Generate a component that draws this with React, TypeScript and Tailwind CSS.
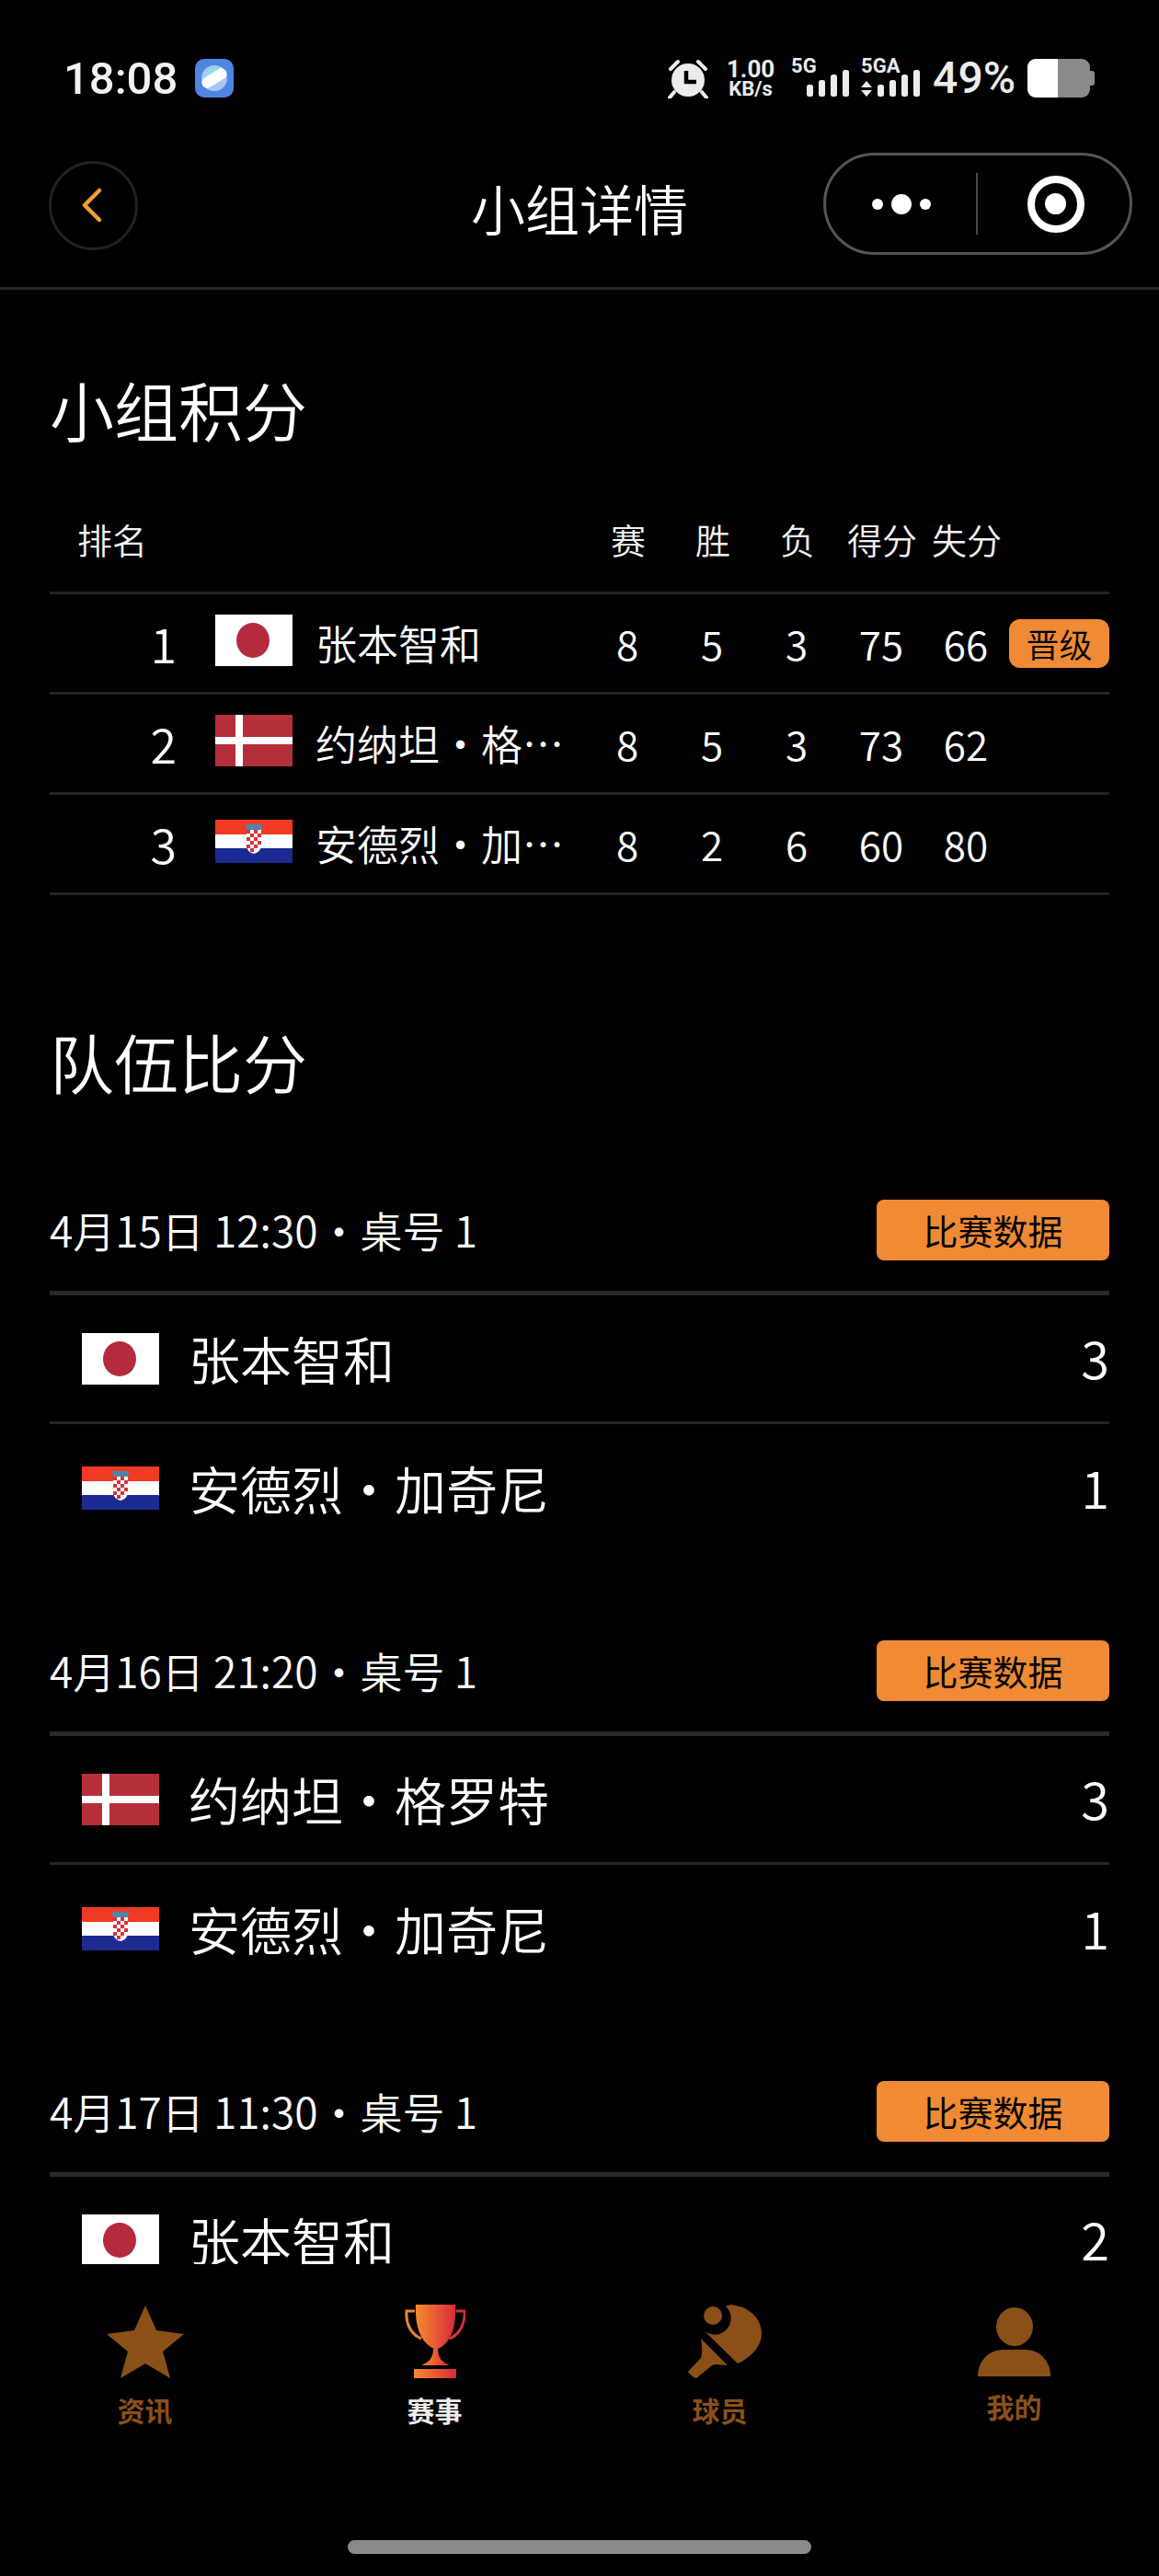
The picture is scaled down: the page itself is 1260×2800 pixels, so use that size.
import React from 'react';

type Country = 'jp' | 'dk' | 'hr';

const standings = [
  { rank: 1, country: 'jp' as Country, name: '张本智和', played: 8, won: 5, lost: 3, scored: 75, conceded: 66, promoted: true },
  { rank: 2, country: 'dk' as Country, name: '约纳坦・格罗特', played: 8, won: 5, lost: 3, scored: 73, conceded: 62, promoted: false },
  { rank: 3, country: 'hr' as Country, name: '安德烈・加奇尼', played: 8, won: 2, lost: 6, scored: 60, conceded: 80, promoted: false },
];

const matches = [
  { id: 1, time: '4月15日 12:30・桌号 1', players: [{ country: 'jp' as Country, name: '张本智和', score: 3 }, { country: 'hr' as Country, name: '安德烈・加奇尼', score: 1 }] },
  { id: 2, time: '4月16日 21:20・桌号 1', players: [{ country: 'dk' as Country, name: '约纳坦・格罗特', score: 3 }, { country: 'hr' as Country, name: '安德烈・加奇尼', score: 1 }] },
  { id: 3, time: '4月17日 11:30・桌号 1', players: [{ country: 'jp' as Country, name: '张本智和', score: 2 }, { country: 'dk' as Country, name: '约纳坦・格罗特', score: 3 }] },
];

const Flag = ({ country }: { country: Country }) => {
  if (country === 'jp') {
    return (
      <svg width="84" height="56" viewBox="0 0 84 56" className="shrink-0 block">
        <rect width="84" height="56" fill="#fff" />
        <ellipse cx="41" cy="28" rx="18" ry="19" fill="#b52a3c" />
      </svg>
    );
  }
  if (country === 'dk') {
    return (
      <svg width="84" height="56" viewBox="0 0 84 56" className="shrink-0 block">
        <rect width="84" height="56" fill="#b52f3b" />
        <rect x="22" width="8" height="56" fill="#fff" />
        <rect y="24" width="84" height="8" fill="#fff" />
      </svg>
    );
  }
  return (
    <svg width="84" height="47" viewBox="0 0 84 47" className="shrink-0 block">
      <rect width="84" height="16" fill="#f03a24" />
      <rect y="16" width="84" height="15" fill="#fff" />
      <rect y="31" width="84" height="16" fill="#1c2a92" />
      <path d="M33 5 L51 5 L50 11 L34 11 Z" fill="#4d86a8" />
      <path d="M34 11 H50 V27 Q50 35 42 37 Q34 35 34 27 Z" fill="#fff" />
      <path d="M34 11h4v4h-4z M42 11h4v4h-4z M38 15h4v4h-4z M46 15h4v4h-4z M34 19h4v4h-4z M42 19h4v4h-4z M38 23h4v4h-4z M46 23h4v4h-4z M34 27h4v4h-4z M42 27h4v4h-4z M38 31h4v4h-4z" fill="#d8323a" />
    </svg>
  );
};

const SignalBars = () => (
  <svg width="46" height="29" viewBox="0 0 46 29" className="block">
    <rect x="0" y="16" width="7" height="13" rx="2.5" fill="#ececec" />
    <rect x="13" y="11" width="7" height="18" rx="2.5" fill="#ececec" />
    <rect x="26" y="5" width="7" height="24" rx="2.5" fill="#ececec" />
    <rect x="39" y="0" width="7" height="29" rx="2.5" fill="#ececec" />
  </svg>
);

const StatusBar = () => (
  <div className="h-[146px] shrink-0 flex items-start justify-between pt-[64px] pl-[69px] pr-[70px] font-['Roboto',sans-serif]">
    <div className="flex items-center gap-[19px] h-[42px]">
      <span className="text-[49px] leading-none font-medium text-[#f2f2f2]">18:08</span>
      <svg width="42" height="42" viewBox="0 0 42 42">
        <rect width="42" height="42" rx="10" fill="#4f84e0" />
        <circle cx="21" cy="21" r="14" fill="#a9c5f2" />
        <path d="M10 19 C14 10 24 6 31 10 L12 26 Z" fill="#8fdcec" />
        <rect x="6" y="15" width="30" height="12" rx="6" fill="#fff" transform="rotate(-32 21 21)" />
      </svg>
    </div>
    <div className="flex items-start">
      <svg width="44" height="43" viewBox="0 0 44 43" className="block">
        <circle cx="22" cy="23" r="18" fill="#ececec" />
        <path d="M20 13 V25 H31" fill="none" stroke="#000" strokeWidth="4.5" />
        <path d="M3 11 L11 3 M41 11 L33 3 M7 36 L2 42 M37 36 L42 42" stroke="#ececec" strokeWidth="4" strokeLinecap="round" />
      </svg>
      <div className="ml-[20px] w-[52px] flex flex-col items-center font-bold text-[#ececec]">
        <span className="text-[26px] leading-[20px] mt-[1px]">1.00</span>
        <span className="text-[22px] leading-[20px] mt-[2px]">KB/s</span>
      </div>
      <div className="ml-[18px] w-[63px] flex flex-col">
        <span className="text-[22px] leading-[16px] font-bold text-[#ececec]">5G</span>
        <div className="self-end -mt-[4px]"><SignalBars /></div>
      </div>
      <div className="ml-[13px] w-[64px] flex flex-col">
        <span className="text-[22px] leading-[16px] font-bold text-[#ececec]">5GA</span>
        <div className="flex items-end justify-between -mt-[4px]">
          <svg width="12" height="17" viewBox="0 0 12 17" className="block">
            <path d="M6 0 L12 7 H0 Z M0 10 H12 L6 17 Z" fill="#ececec" />
          </svg>
          <SignalBars />
        </div>
      </div>
      <span className="ml-[14px] text-[48px] leading-[42px] font-medium text-[#ececec]">49%</span>
      <div className="ml-[13px] flex items-center h-[42px]">
        <div className="w-[68px] h-[42px] rounded-[9px] bg-[#8a8a8a] overflow-hidden">
          <div className="w-[33px] h-full bg-white" />
        </div>
        <div className="w-[5px] h-[16px] rounded-r-[3px] bg-[#8a8a8a]" />
      </div>
    </div>
  </div>
);

const NavBar = () => (
  <div className="h-[169px] shrink-0 grid grid-cols-[1fr_auto_1fr] items-center border-b-[3px] border-[#2a2a2a] pb-[16px] pt-[4px]">
    <div className="pl-[53px]">
      <div className="w-[97px] h-[97px] rounded-full border-[3px] border-[#222222] flex items-center justify-center pr-[4px]">
        <svg width="24" height="38" viewBox="0 0 24 38">
          <path d="M20 3 L4 19 L20 35" fill="none" stroke="#f0a030" strokeWidth="4.5" strokeLinecap="round" strokeLinejoin="round" />
        </svg>
      </div>
    </div>
    <h1 className="mt-[5px] text-[59px] leading-none font-[350] text-white">小组详情</h1>
    <div className="flex justify-end pr-[29px]">
      <div className="w-[336px] h-[111px] mb-[3px] rounded-full border-[3px] border-[#555555] flex items-center">
        <div className="w-[163px] flex items-center justify-center gap-[9px]">
          <span className="w-[12px] h-[12px] rounded-full bg-white" />
          <span className="w-[22px] h-[22px] rounded-full bg-white" />
          <span className="w-[12px] h-[12px] rounded-full bg-white" />
        </div>
        <div className="w-[2px] h-[67px] bg-[#4a4a4a]" />
        <div className="flex-1 flex items-center justify-center pl-[4px]">
          <div className="w-[62px] h-[62px] rounded-full border-[8px] border-white flex items-center justify-center">
            <span className="w-[23px] h-[23px] rounded-full bg-white" />
          </div>
        </div>
      </div>
    </div>
  </div>
);

const statCell = 'w-[92px] shrink-0 text-center';

const Standings = () => (
  <section>
    <h2 className="text-[70px] leading-none font-[350] text-white">小组积分</h2>
    <div className="mt-[56px] h-[110px] flex items-center border-b-[3px] border-[#242424] text-[38px] font-[350] text-[#f2f2f2] pb-[8px]">
      <span className="w-[583px] pl-[30px]">排名</span>
      <span className={statCell}>赛</span>
      <span className={statCell}>胜</span>
      <span className={statCell}>负</span>
      <span className={statCell}>得分</span>
      <span className={statCell}>失分</span>
    </div>
    {standings.map((row) => (
      <div key={row.rank} className="h-[109px] flex items-center border-b-[3px] border-[#242424] text-[44px] font-[350] text-white">
        <span className="w-[138px] shrink-0 text-right text-[52px] leading-none">{row.rank}</span>
        <div className="ml-[42px] shrink-0 -mt-[6px]">
          <Flag country={row.country} />
        </div>
        <span className="w-[275px] shrink-0 truncate ml-[25px] text-[45px]">{row.name}</span>
        <span className="w-[18px] shrink-0" />
        <span className={statCell}>{row.played}</span>
        <span className={statCell}>{row.won}</span>
        <span className={statCell}>{row.lost}</span>
        <span className={statCell}>{row.scored}</span>
        <span className={statCell}>{row.conceded}</span>
        {row.promoted && (
          <span className="ml-[1px] w-[109px] h-[53px] shrink-0 rounded-[12px] bg-[#f08a34] text-[36px] leading-none text-black flex items-center justify-center">
            晋级
          </span>
        )}
      </div>
    ))}
  </section>
);

const MatchCard = ({ match }: { match: (typeof matches)[number] }) => (
  <div className="mb-[96px]">
    <div className="flex items-center justify-between pb-[33px] border-b-[5px] border-[#2a2a2a]">
      <span className="text-[46px] leading-[1.2] font-[350] text-white">{match.time}</span>
      <span className="w-[253px] h-[66px] rounded-[8px] bg-[#f08a34] text-[38px] leading-none text-black flex items-center justify-center">
        比赛数据
      </span>
    </div>
    {match.players.map((player, index) => (
      <div
        key={player.name}
        className={
          index === 0
            ? 'h-[140px] flex items-center pl-[35px] border-b-[3px] border-[#242424]'
            : 'h-[139px] flex items-center pl-[35px]'
        }
      >
        <Flag country={player.country} />
        <span className="ml-[32px] mb-[2px] flex-1 text-[56px] leading-[1.2] font-[350] text-white">{player.name}</span>
        <span className="mb-[4px] text-[56px] leading-[1.2] font-[350] text-white">{player.score}</span>
      </div>
    ))}
  </div>
);

const Tab = ({ label, labelClass, children }: { label: string; labelClass: string; children: React.ReactNode }) => (
  <div className="flex flex-col items-center">
    <div className="h-[80px] flex items-center justify-center">{children}</div>
    <span className={labelClass}>{label}</span>
  </div>
);

const TabBar = () => (
  <div className="h-[339px] shrink-0 bg-black flex flex-col">
    <div className="grid grid-cols-4 pt-[44px]">
      <Tab label="资讯" labelClass="mt-[19px] text-[30px] leading-none font-bold text-[#8a5018]">
        <svg width="84" height="79" viewBox="0 0 84 79">
          <path d="M42 0 L54 27 L84 31 L61 50 L69 79 L42 63 L15 79 L23 50 L0 31 L30 27 Z" fill="#8a5018" />
        </svg>
      </Tab>
      <Tab label="赛事" labelClass="mt-[19px] text-[30px] leading-none font-bold text-[#ececec]">
        <svg width="66" height="80" viewBox="0 0 66 80">
          <defs>
            <linearGradient id="cup" x1="0" y1="0" x2="1" y2="0">
              <stop offset="0" stopColor="#f08a30" />
              <stop offset="0.3" stopColor="#ee6f30" />
              <stop offset="1" stopColor="#d8283c" />
            </linearGradient>
          </defs>
          <path d="M12 0 H55 C56 22 52 42 34 49 C16 42 11 22 12 0 Z" fill="url(#cup)" />
          <path d="M11 7 H2 C1 20 6 32 18 37 M56 7 H65 C66 20 60 32 49 37" fill="none" stroke="url(#cup)" strokeWidth="3" />
          <path d="M31 48 H36 C36 58 41 63 49 66 H18 C26 63 31 58 31 48 Z" fill="url(#cup)" />
          <rect x="10" y="70" width="46" height="10" fill="url(#cup)" />
        </svg>
      </Tab>
      <Tab label="球员" labelClass="mt-[19px] mr-[10px] text-[30px] leading-none font-bold text-[#8a5018]">
        <svg width="80" height="80" viewBox="0 0 80 80">
          <circle cx="27" cy="12" r="10" fill="#8a5018" />
          <path d="M17 28 A16 16 0 0 0 41 2 C45 0 48 0 52 1 C68 4 80 16 80 32 C80 45 68 58 54 64 Z" fill="#8a5018" />
          <path d="M14 37 L43 66 C35 66 30 64 26 66 L9 80 C7 80 1 75 0 73 L14 58 C16 52 15 44 14 37 Z" fill="#8a5018" />
        </svg>
      </Tab>
      <Tab label="我的" labelClass="mt-[15px] text-[30px] leading-none font-bold text-[#8a5018]">
        <svg width="79" height="75" viewBox="0 0 79 75">
          <ellipse cx="40" cy="21" rx="20" ry="21" fill="#8a5018" />
          <path d="M0 75 C0 58 12 46 28 46 H52 C67 46 79 58 79 75 Z" fill="#8a5018" />
        </svg>
      </Tab>
    </div>
    <div className="mt-auto mb-[24px] self-center w-[504px] h-[15px] rounded-full bg-[#8a8a8a]" />
  </div>
);

export default function App() {
  return (
    <div className="w-[1260px] h-[2800px] bg-black flex flex-col overflow-hidden font-['Noto_Sans_CJK_SC','Noto_Sans',sans-serif]">
      <StatusBar />
      <NavBar />
      <main className="flex-1 min-h-0 overflow-hidden px-[54px] pt-[95px]">
        <Standings />
        <h2 className="mt-[146px] mb-[115px] text-[70px] leading-none font-[350] text-white">队伍比分</h2>
        {matches.map((match) => (
          <MatchCard key={match.id} match={match} />
        ))}
      </main>
      <TabBar />
    </div>
  );
}
